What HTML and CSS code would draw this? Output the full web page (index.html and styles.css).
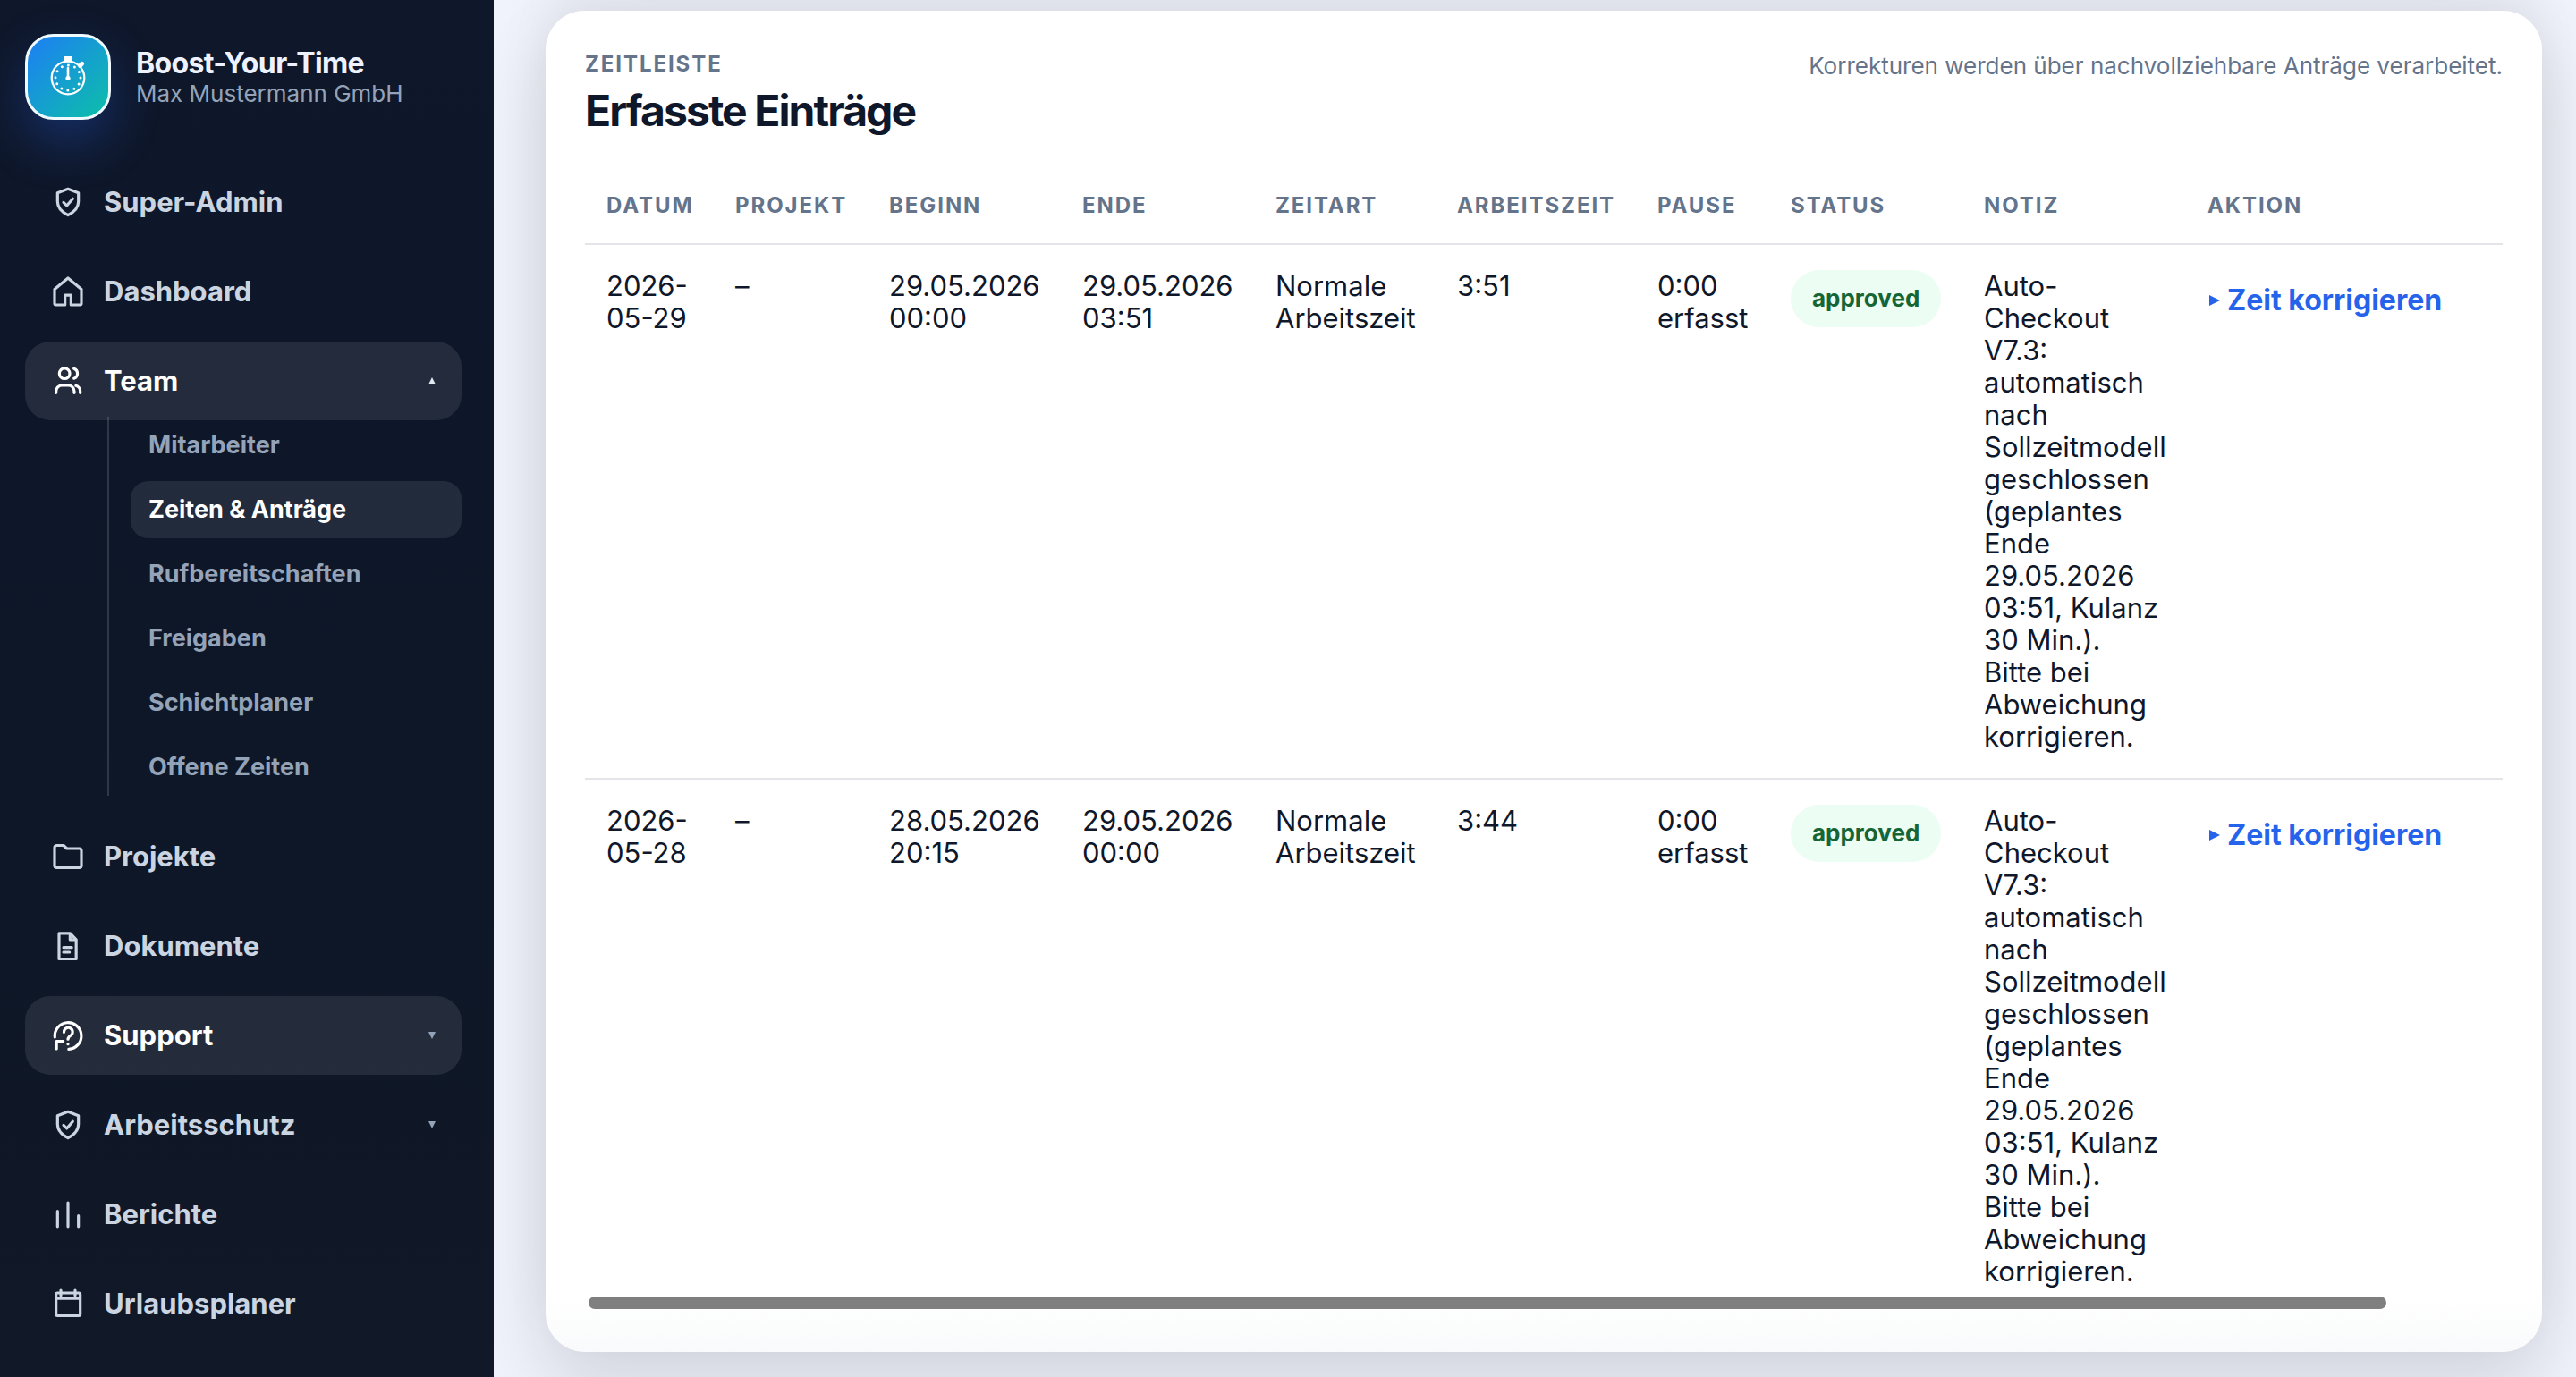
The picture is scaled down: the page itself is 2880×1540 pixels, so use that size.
FILE: index.html
```html
<!DOCTYPE html>
<html lang="de">
<head>
<meta charset="utf-8">
<title>Boost-Your-Time – Zeiten &amp; Anträge</title>
<link rel="stylesheet" href="styles.css">
</head>
<body>
<div class="app">
  <aside class="sidebar">
    <div class="brand">
      <div class="brand-mark">
        <svg viewBox="0 0 48 48" class="brand-icon" aria-hidden="true">
          <rect x="19" y="1" width="10" height="5" rx="1" fill="#fff"/>
          <circle cx="24" cy="25" r="18.3" fill="none" stroke="#fff" stroke-width="2.2"/>
          <path d="M37.500 11.500l2.200-2.200" stroke="#fff" stroke-width="4.800" stroke-linecap="round"/>
          <circle cx="24" cy="25" r="14" fill="none" stroke="#fff" stroke-width="3" stroke-linecap="round" stroke-dasharray="0 7.330"/>
          <path d="M24 14v11" stroke="#fff" stroke-width="2.600" stroke-linecap="round"/>
          <circle cx="24" cy="25.500" r="2.600" fill="#fff"/>
        </svg>
      </div>
      <div class="brand-text">
        <strong class="brand-name">Boost-Your-Time</strong>
        <span class="brand-company">Max Mustermann GmbH</span>
      </div>
    </div>
    <nav class="nav" aria-label="Hauptnavigation">
      <a class="nav-item" href="#"><svg class="icon" viewBox="0 0 24 24" aria-hidden="true"><path d="M12 3.200l7 2.600v5.900c0 4-2.800 7-7 9.100-4.200-2.100-7-5.100-7-9.100V5.800z"/><path d="M9 12.200l2.200 2.200 4-4.700"/></svg><span class="nav-label">Super-Admin</span></a>
      <a class="nav-item" href="#"><svg class="icon" viewBox="0 0 24 24" aria-hidden="true"><path d="M3 10.500L12 3l9 7.500V20a1 1 0 0 1-1 1h-6v-6.500h-4V21H4a1 1 0 0 1-1-1z"/></svg><span class="nav-label">Dashboard</span></a>
      <button class="nav-item is-active" type="button" aria-expanded="true"><svg class="icon" viewBox="0 0 24 24" aria-hidden="true"><circle cx="9.700" cy="7" r="3.500"/><path d="M4 20v-1a4 4 0 0 1 4-4h4.200a4 4 0 0 1 4 4v1"/><path d="M16 3.700a3.500 3.500 0 0 1 0 6.600"/><path d="M17.300 15.200a3.800 3.800 0 0 1 2.900 3.800v1"/></svg><span class="nav-label">Team</span><svg class="caret" viewBox="0 0 10 10" aria-hidden="true"><path d="M5 0l5 10H0z"/></svg></button>
      <div class="subnav">
        <a class="subnav-item" href="#">Mitarbeiter</a>
        <a class="subnav-item is-current" href="#" aria-current="page">Zeiten &amp; Anträge</a>
        <a class="subnav-item" href="#">Rufbereitschaften</a>
        <a class="subnav-item" href="#">Freigaben</a>
        <a class="subnav-item" href="#">Schichtplaner</a>
        <a class="subnav-item" href="#">Offene Zeiten</a>
      </div>
      <a class="nav-item" href="#"><svg class="icon" viewBox="0 0 24 24" aria-hidden="true"><path d="M3 6a1.500 1.500 0 0 1 1.500-1.500H9l2.200 2.100h8.300A1.500 1.500 0 0 1 21 8.100V18a1.500 1.500 0 0 1-1.500 1.500h-15A1.500 1.500 0 0 1 3 18z"/></svg><span class="nav-label">Projekte</span></a>
      <a class="nav-item" href="#"><svg class="icon" viewBox="0 0 24 24" aria-hidden="true"><path d="M6 3.500h7.500l4 4.200v13H6z"/><path d="M13.400 4v3.800h3.800M9 13h5.500M9 16.200h4"/></svg><span class="nav-label">Dokumente</span></a>
      <button class="nav-item is-active" type="button" aria-expanded="false"><svg class="icon" viewBox="0 0 24 24" aria-hidden="true"><path d="M3.200 13.200a8.900 8.900 0 1 1 9.300 8"/><path d="M4.300 21v-5h4.500"/><path d="M9.300 9.800a2.900 2.900 0 1 1 4.600 2.200c-1.300.900-1.900 1.300-1.900 2.500M12 17.700v.1"/></svg><span class="nav-label">Support</span><svg class="caret is-down" viewBox="0 0 10 10" aria-hidden="true"><path d="M0 0h10L5 10z"/></svg></button>
      <button class="nav-item" type="button" aria-expanded="false"><svg class="icon" viewBox="0 0 24 24" aria-hidden="true"><path d="M12 3.200l7 2.600v5.900c0 4-2.800 7-7 9.100-4.200-2.100-7-5.100-7-9.100V5.800z"/><path d="M9 12.200l2.200 2.200 4-4.700"/></svg><span class="nav-label">Arbeitsschutz</span><svg class="caret is-down" viewBox="0 0 10 10" aria-hidden="true"><path d="M0 0h10L5 10z"/></svg></button>
      <a class="nav-item" href="#"><svg class="icon" viewBox="0 0 24 24" aria-hidden="true"><path d="M5 20.300V10M12 20.300V4.200M19 20.300V13"/></svg><span class="nav-label">Berichte</span></a>
      <a class="nav-item" href="#"><svg class="icon" viewBox="0 0 24 24" aria-hidden="true"><rect x="4" y="4.800" width="16.200" height="15.300" rx="1"/><path d="M4 8.500h16M7.200 3v3.500M16.800 3v3.500"/></svg><span class="nav-label">Urlaubsplaner</span></a>
    </nav>
  </aside>
  <main class="content">
    <section class="card" aria-labelledby="entries-title">
      <header class="card-head">
        <div>
          <p class="eyebrow">Zeitleiste</p>
          <h2 class="card-title" id="entries-title">Erfasste Einträge</h2>
        </div>
        <p class="hint">Korrekturen werden über nachvollziehbare Anträge verarbeitet.</p>
      </header>
      <div class="table-frame">
        <div class="table-scroll">
          <table class="entries">
            <colgroup><col class="c-date"><col class="c-project"><col class="c-time"><col class="c-time"><col class="c-kind"><col class="c-work"><col class="c-break"><col class="c-status"><col class="c-note"><col class="c-action"></colgroup>
            <thead>
              <tr><th scope="col">Datum</th><th scope="col">Projekt</th><th scope="col">Beginn</th><th scope="col">Ende</th><th scope="col">Zeitart</th><th scope="col">Arbeitszeit</th><th scope="col">Pause</th><th scope="col">Status</th><th scope="col">Notiz</th><th scope="col">Aktion</th></tr>
            </thead>
            <tbody>
              <tr>
                <td>2026-05-29</td><td>–</td><td>29.05.2026 00:00</td><td>29.05.2026 03:51</td><td>Normale Arbeitszeit</td><td>3:51</td><td>0:00 erfasst</td>
                <td><span class="badge">approved</span></td>
                <td>Auto-Checkout V7.3: automatisch nach Sollzeitmodell geschlossen (geplantes Ende 29.05.2026 03:51, Kulanz 30&nbsp;Min.). Bitte&nbsp;bei Abweichung korrigieren.</td>
                <td><button class="action" type="button"><svg class="action-mark" viewBox="0 0 10 10" aria-hidden="true"><path d="M0 0l10 5-10 5z"/></svg>Zeit korrigieren</button></td>
              </tr>
              <tr>
                <td>2026-05-28</td><td>–</td><td>28.05.2026 20:15</td><td>29.05.2026 00:00</td><td>Normale Arbeitszeit</td><td>3:44</td><td>0:00 erfasst</td>
                <td><span class="badge">approved</span></td>
                <td>Auto-Checkout V7.3: automatisch nach Sollzeitmodell geschlossen (geplantes Ende 29.05.2026 03:51, Kulanz 30&nbsp;Min.). Bitte&nbsp;bei Abweichung korrigieren.</td>
                <td><button class="action" type="button"><svg class="action-mark" viewBox="0 0 10 10" aria-hidden="true"><path d="M0 0l10 5-10 5z"/></svg>Zeit korrigieren</button></td>
              </tr>
            </tbody>
          </table>
        </div>
        <div class="scroll-thumb"></div>
      </div>
    </section>
  </main>
</div>
</body>
</html>
```

FILE: styles.css
```css
*, *::before, *::after { box-sizing: border-box; }

body {
  margin: 0;
  font-family: Inter, "Liberation Sans", sans-serif;
  font-size: 31px;
  line-height: 36px;
  color: #0f172a;
  background: #f0f3fb;
}

p, h2 { margin: 0; }
a { color: inherit; text-decoration: none; }
button { font: inherit; color: inherit; background: none; border: 0; padding: 0; text-align: left; cursor: pointer; }

.app { display: flex; min-height: 100vh; }

/* Sidebar */
.sidebar {
  position: relative;
  z-index: 1;
  flex: 0 0 552px;
  padding: 38px 36px 38px 28px;
  color: #cbd5e1;
  background: #0f172a linear-gradient(180deg, #0f172a, #0d1728 50%, #111827);
}

.brand { display: flex; align-items: center; gap: 28px; margin-bottom: 48px; }
.brand-mark {
  display: grid;
  place-items: center;
  flex: none;
  width: 96px;
  height: 96px;
  border: 3px solid #f0fbff;
  border-radius: 32px;
  background: linear-gradient(135deg, #1d7ef5, #0cc0a8);
  box-shadow: 0 24px 56px rgba(37, 99, 235, 0.32);
}
.brand-icon { width: 48px; height: 48px; }
.brand-text { display: flex; flex-direction: column; padding-top: 2px; }
.brand-name { font-size: 32px; line-height: 36px; font-weight: 700; letter-spacing: -0.02em; color: #eef2ff; }
.brand-company { font-size: 26px; line-height: 32px; color: #94a3b8; }

.nav { display: flex; flex-direction: column; gap: 12px; }
.nav-item {
  display: flex;
  align-items: center;
  gap: 20px;
  width: 100%;
  height: 88px;
  padding: 0 28px;
  border-radius: 28px;
  font-size: 31px;
  font-weight: 650;
}
.nav-item.is-active { color: #fff; background: rgba(255, 255, 255, 0.09); }
.nav-label { flex: 1; }
.icon {
  flex: none;
  width: 40px;
  height: 40px;
  fill: none;
  stroke: currentColor;
  stroke-width: 1.9;
  stroke-linecap: round;
  stroke-linejoin: round;
}
.caret { flex: none; width: 10px; height: 8px; fill: #e2e8f0; }
.caret.is-down { fill: #94a3b8; }

.subnav {
  display: flex;
  flex-direction: column;
  gap: 8px;
  margin: -16px 0 12px 92px;
  padding-left: 24px;
  border-left: 2px solid rgba(255, 255, 255, 0.14);
}
.subnav-item {
  display: flex;
  align-items: center;
  height: 64px;
  padding: 0 20px;
  border-radius: 20px;
  font-size: 27px;
  font-weight: 700;
  color: #94a3b8;
}
.subnav-item.is-current { color: #fff; background: rgba(255, 255, 255, 0.09); }

/* Entries card */
.content { flex: 1; min-width: 0; padding: 12px 38px 28px 58px; }
.card {
  padding: 44px;
  border-radius: 44px;
  background: linear-gradient(180deg, #fff 96%, #f9fafb);
  box-shadow: 0 36px 80px rgba(20, 23, 35, 0.14), 0 -36px 60px rgba(15, 23, 42, 0.06);
}
.card-head { display: flex; justify-content: space-between; margin-bottom: 28px; }
.eyebrow {
  margin-bottom: 4px;
  font-size: 24px;
  line-height: 32px;
  font-weight: 700;
  letter-spacing: 0.08em;
  text-transform: uppercase;
  color: #64748b;
}
.card-title { font-size: 48px; line-height: 64px; font-weight: 700; letter-spacing: -0.04em; }
.hint { font-size: 26px; line-height: 36px; color: #64748b; }

.table-frame { position: relative; }
.table-scroll { overflow: hidden; }
.entries { width: 2278px; table-layout: fixed; border-collapse: separate; border-spacing: 0; }
.entries th, .entries td {
  padding: 28px 24px;
  border-bottom: 2px solid #e3e5e9;
  text-align: left;
  vertical-align: top;
}
.entries th {
  padding: 30px 24px 26px;
  font-size: 24px;
  line-height: 32px;
  font-weight: 700;
  letter-spacing: 0.08em;
  text-transform: uppercase;
  color: #64748b;
}
.entries tbody tr:last-child td { border-bottom: 0; }
.c-date { width: 144px; }
.c-project { width: 172px; }
.c-time { width: 216px; }
.c-kind { width: 203px; }
.c-work { width: 224px; }
.c-break { width: 149px; }
.c-status { width: 216px; }
.c-note { width: 250px; }

.badge {
  display: inline-block;
  padding: 16px 24px;
  border-radius: 32px;
  font-size: 26px;
  line-height: 32px;
  font-weight: 700;
  color: #166534;
  background: #ecfdf3;
}
.action { display: flex; align-items: center; gap: 8px; height: 68px; padding-left: 2px; font-size: 32px; font-weight: 700; color: #2563eb; }
.action-mark { width: 12px; height: 12px; fill: currentColor; }

.scroll-thumb {
  position: absolute;
  left: 4px;
  bottom: 4px;
  width: 93.75%;
  height: 14px;
  border-radius: 7px;
  background: #7f7f7f;
}
```
